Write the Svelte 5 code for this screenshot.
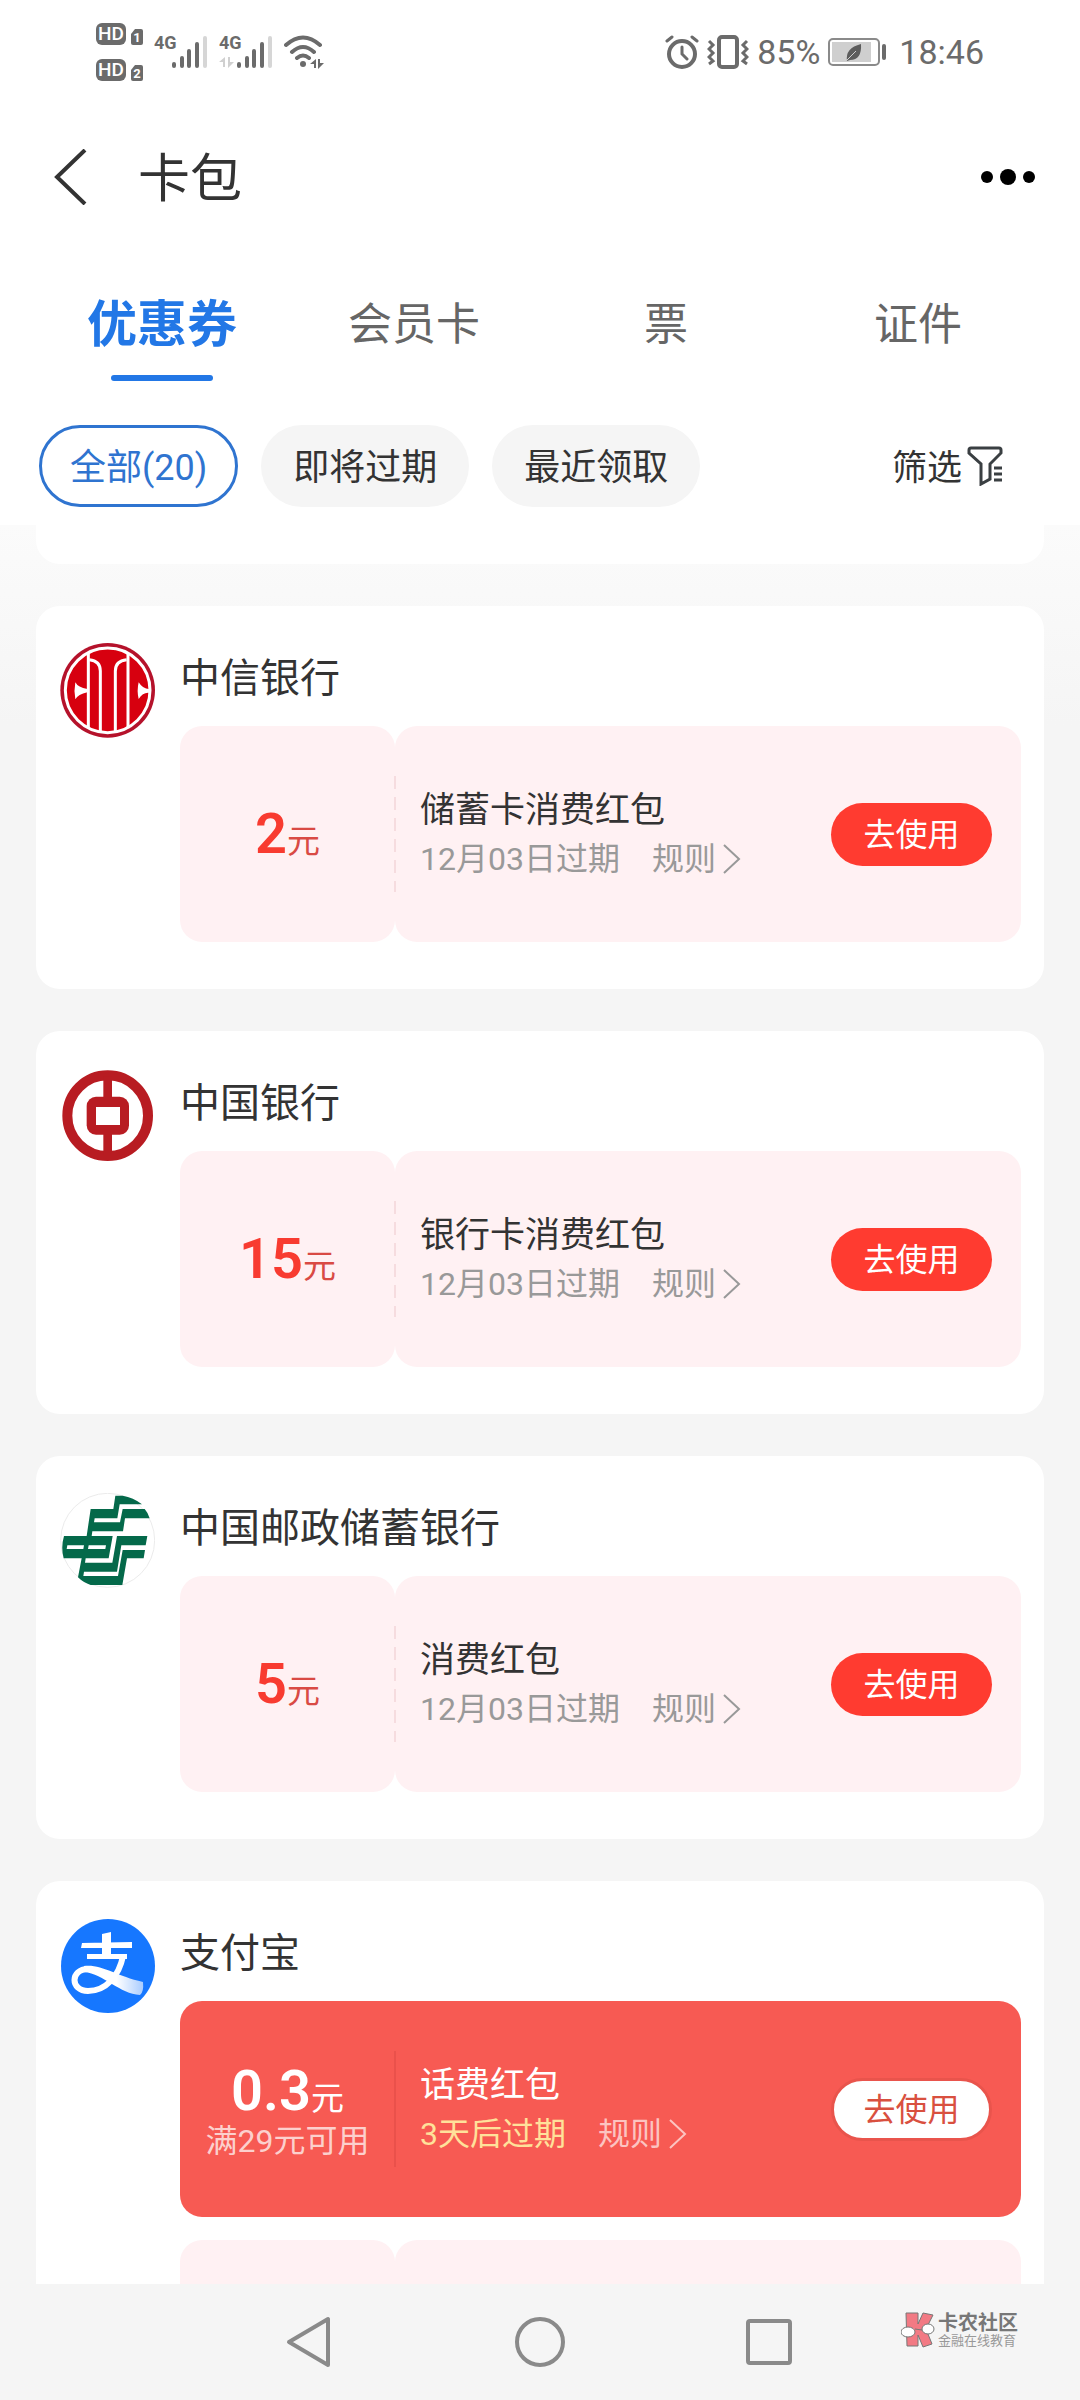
<script lang="ts">
	type Coupon = {
		amount?: string;
		limit?: string;
		title?: string;
		expiry?: string;
		urgent?: boolean;
	};

	type Merchant = {
		logo: 'citic' | 'boc' | 'psbc' | 'alipay';
		name: string;
		coupons: Coupon[];
	};

	const tabs = ['优惠券', '会员卡', '票', '证件'];
	const chips = ['全部(20)', '即将过期', '最近领取'];

	const merchants: Merchant[] = [
		{
			logo: 'citic',
			name: '中信银行',
			coupons: [{ amount: '2', title: '储蓄卡消费红包', expiry: '12月03日过期' }]
		},
		{
			logo: 'boc',
			name: '中国银行',
			coupons: [{ amount: '15', title: '银行卡消费红包', expiry: '12月03日过期' }]
		},
		{
			logo: 'psbc',
			name: '中国邮政储蓄银行',
			coupons: [{ amount: '5', title: '消费红包', expiry: '12月03日过期' }]
		},
		{
			logo: 'alipay',
			name: '支付宝',
			coupons: [
				{ amount: '0.3', limit: '满29元可用', title: '话费红包', expiry: '3天后过期', urgent: true },
				{}
			]
		}
	];

	let activeTab = $state(0);
	let activeChip = $state(0);
</script>

{#snippet signal(data: boolean)}
	<svg class="signal" width="54" height="38" viewBox="0 -4 54 38" aria-hidden="true">
		<text x="0" y="14" font-size="18" font-weight="700" fill="#6b6b6b">4G</text>
		{#if data}
			<path d="M6 22v10h-2v-5h-4zM9 22h2v5h4l-6 6z" fill="#d0d0d0" />
		{/if}
		<g stroke-width="4" stroke-linecap="round" stroke="#6b6b6b">
			<path d="M20 29v2M28 23v8M35 16v15M43 9v22" />
			<path d="M51 3v28" stroke="#d6d6d6" />
		</g>
	</svg>
{/snippet}

{#snippet logo(kind: string)}
	{#if kind === 'citic'}
		<svg class="logo" viewBox="60 69 285 285" aria-hidden="true">
			<circle cx="203" cy="211" r="142" fill="#b5122b" />
			<circle cx="203" cy="211" r="127" fill="#d7000f" stroke="#fff" stroke-width="9" />
			<g fill="none" stroke="#fff" stroke-width="9">
				<path d="M145 100v225M264 100v225" />
				<path d="M148 119c20 2 33 12 33 34v182M260 119c-20 2-34 12-34 34v182" />
			</g>
			<path d="M106 187q8 16 36 20v10q-28 6-36 21q-5-25 0-51zM296 187q14 22 34 20v12q-20-4-34 18q-6-25 0-50z" fill="#fff" />
		</svg>
	{:else if kind === 'boc'}
		<svg class="logo" viewBox="60 84 285 285" aria-hidden="true">
			<circle cx="203" cy="227" r="121" fill="#fff" stroke="#b81c22" stroke-width="30" />
			<path d="M190 110h26v235h-26z" fill="#b81c22" />
			<rect x="140" y="170" width="127" height="114" rx="28" fill="#b81c22" />
			<path d="M168 201h72v54h-72z" fill="#fff" />
		</svg>
	{:else if kind === 'psbc'}
		<svg class="logo" viewBox="60 69 285 285" aria-hidden="true">
			<circle cx="203" cy="211" r="141" fill="#fff" stroke="#ebebeb" stroke-width="3" />
			<path
				d="M152 117H220L226 77H248Q280 82 306 103H239L232 145H164L162 157H240L248 117H314Q324 128 329 145H255L249 184H157L155 198H218L206 265H137L135 278H217L231 198H322L317 226H244L231 305H132L130 318H234L248 240H315L311 265H261L247 345H152Q130 338 114 322L125 265H71Q62 232 72 198H140Z"
				fill="#04694a"
			/>
			<path d="M82 226h50l-2 11h-50zM146 226h52l-2 11h-52z" fill="#fff" />
		</svg>
	{:else}
		<svg class="logo" viewBox="0 0 95 95" aria-hidden="true">
			<defs>
				<linearGradient id="ribbon" x1="0" x2="1">
					<stop offset="0.55" stop-color="#fff" />
					<stop offset="1" stop-color="#a9ccff" />
				</linearGradient>
			</defs>
			<circle cx="48" cy="48" r="47" fill="#1677ff" />
			<path d="M22 25l50-1v6H21zM27 36h40v5H27zM42 16l9-2v24h-9z" fill="#fff" />
			<path d="M63 38C59 58 46 73 28 73C10 73 10 51 28 51" fill="none" stroke="#fff" stroke-width="6" />
			<path d="M24 48C42 46 56 58 83 64Q84 74 80 77C60 76 44 56 24 54Z" fill="url(#ribbon)" />
		</svg>
	{/if}
{/snippet}

<div class="app">
	<header>
		<div class="status">
			<div class="sims">
				{#each ['1', '2'] as sim}
					<div class="sim">
						<span class="hd">HD</span>
						<svg width="12" height="16" viewBox="0 0 12 16" aria-hidden="true">
							<path d="M4 0h6q2 0 2 2v12q0 2-2 2H2q-2 0-2-2V5z" fill="#6b6b6b" />
							<text x="6" y="13" font-size="13" font-weight="700" text-anchor="middle" fill="#fff">{sim}</text>
						</svg>
					</div>
				{/each}
			</div>
			{@render signal(false)}
			{@render signal(true)}
			<svg width="40" height="34" viewBox="0 0 40 34" aria-hidden="true">
				<g fill="none" stroke="#6b6b6b" stroke-width="4" stroke-linecap="round">
					<path d="M2 10Q19-5 36 10M8 17q11-10 22 0M13 23q6-5 12 0" />
				</g>
				<circle cx="19" cy="29" r="3" fill="#6b6b6b" />
				<path d="M32 24v9h-2v-4h-4zM34 24h2v4h4l-6 6z" fill="#6b6b6b" />
			</svg>
			<div class="status-right">
				<svg width="34" height="34" viewBox="0 0 34 34" fill="none" stroke="#6b6b6b" stroke-width="4" stroke-linecap="round" aria-hidden="true">
					<circle cx="17" cy="19" r="13" />
					<path d="M17 12v7l5 5M2 6l5-4M32 6l-5-4" stroke-width="3" />
				</svg>
				<svg width="42" height="34" viewBox="0 0 42 34" fill="none" stroke="#6b6b6b" stroke-width="4" aria-hidden="true">
					<rect x="12" y="2" width="18" height="30" rx="3" />
					<path d="M2 6l4 4-4 4 4 4-4 4 4 4-4 3M40 6l-4 4 4 4-4 4 4 4-4 4 4 3" stroke-width="3" />
				</svg>
				<span>85%</span>
				<svg class="battery" width="60" height="28" viewBox="0 0 60 28" aria-hidden="true">
					<rect x="1" y="1" width="50" height="26" rx="4" fill="#fff" stroke="#8a8a8a" stroke-width="2" />
					<path d="M4 4h39v20H4z" fill="#cfcfcf" />
					<path d="M33 6Q34 22 22 22l-3 1q-2-13 14-17z" fill="#5c5c5c" />
					<path d="M19 22l9-9" stroke="#cfcfcf" />
					<rect x="54" y="6" width="4" height="16" rx="2" fill="#6b6b6b" />
				</svg>
				<span>18:46</span>
			</div>
		</div>

		<div class="title-bar">
			<button class="icon-button" aria-label="返回">
				<svg width="34" height="56" viewBox="0 0 34 56" fill="none" stroke="#333" stroke-width="4" aria-hidden="true">
					<path d="M31 1L3 28l28 27" />
				</svg>
			</button>
			<h1>卡包</h1>
			<button class="icon-button more" aria-label="更多">
				<svg width="54" height="16" viewBox="0 0 54 16" aria-hidden="true">
					<circle cx="6" cy="8" r="6" />
					<circle cx="27" cy="8" r="8" />
					<circle cx="48" cy="8" r="6" />
				</svg>
			</button>
		</div>

		<nav class="tabs">
			{#each tabs as tab, i}
				<button class="tab" class:active={activeTab === i} onclick={() => (activeTab = i)}>{tab}</button>
			{/each}
		</nav>

		<div class="filters">
			{#each chips as chip, i}
				<button class="chip" class:active={activeChip === i} onclick={() => (activeChip = i)}>{chip}</button>
			{/each}
			<button class="filter">
				筛选
				<svg width="36" height="40" viewBox="0 0 36 40" fill="none" stroke="#3a3f42" stroke-width="3" aria-hidden="true">
					<path d="M4 2h28q2 0 2 2v3L23 18v15l-9 5V18L2 7V4q0-2 2-2z" />
					<path d="M27 22h8M27 28h8M27 34h8" />
				</svg>
			</button>
		</div>
	</header>

	<main>
		<div class="card-end"></div>
		{#each merchants as merchant}
			<section class="card">
				{@render logo(merchant.logo)}
				<div class="card-body">
					<h2>{merchant.name}</h2>
					{#each merchant.coupons as coupon}
						<article class="coupon" class:urgent={coupon.urgent}>
							<div class="value">
								{#if coupon.amount}
									<p class="amount"><strong>{coupon.amount}</strong>元</p>
								{/if}
								{#if coupon.limit}
									<p class="limit">{coupon.limit}</p>
								{/if}
							</div>
							<div class="detail">
								{#if coupon.title}
									<div class="info">
										<h3>{coupon.title}</h3>
										<p class="meta">
											<span class="expiry">{coupon.expiry}</span>
											<a href="#rules">
												规则
												<svg width="18" height="30" viewBox="0 0 18 30" fill="none" stroke="currentColor" stroke-width="2" aria-hidden="true">
													<path d="M1 1l15 14L1 29" />
												</svg>
											</a>
										</p>
									</div>
									<button class="use">去使用</button>
								{/if}
							</div>
						</article>
					{/each}
				</div>
			</section>
		{/each}
	</main>

	<footer>
		<button class="icon-button" aria-label="后退">
			<svg width="52" height="52" viewBox="0 0 52 52" fill="none" stroke="#8a8a8a" stroke-width="4" stroke-linejoin="round" aria-hidden="true">
				<path d="M43 3v46L4 26z" />
			</svg>
		</button>
		<button class="icon-button" aria-label="主页">
			<svg width="52" height="52" viewBox="0 0 52 52" fill="none" stroke="#8a8a8a" stroke-width="4" aria-hidden="true">
				<circle cx="26" cy="26" r="23" />
			</svg>
		</button>
		<button class="icon-button" aria-label="最近任务">
			<svg width="52" height="52" viewBox="0 0 52 52" fill="none" stroke="#8a8a8a" stroke-width="4" aria-hidden="true">
				<rect x="5" y="5" width="42" height="42" rx="2" />
			</svg>
		</button>
		<div class="watermark">
			<svg width="34" height="36" viewBox="0 0 34 36" stroke="#777" aria-hidden="true">
				<path d="M5 1h12v11l5-11 10 2-7 14 6 15-9 3-5-12v11H6z" fill="#f27a84" />
				<ellipse cx="7" cy="20" rx="7" ry="5" fill="#fff" />
				<ellipse cx="27" cy="17" rx="6" ry="5" fill="#fff" />
				<path d="M14 17l7 1" />
			</svg>
			<div>
				<p class="mark-name">卡农社区</p>
				<p class="mark-note">金融在线教育</p>
			</div>
		</div>
	</footer>
</div>

<style>
	:global(body) {
		margin: 0;
	}

	.app {
		display: flex;
		flex-direction: column;
		height: 100vh;
		overflow: hidden;
		background: #f5f5f5;
		color: #333;
		font-family: Roboto, 'Noto Sans CJK SC', sans-serif;
	}

	h1,
	h2,
	h3,
	p {
		margin: 0;
		font-weight: 400;
	}

	button {
		padding: 0;
		border: none;
		background: none;
		color: inherit;
		font-family: inherit;
		cursor: pointer;
	}

	svg {
		display: block;
		flex-shrink: 0;
	}

	header {
		flex-shrink: 0;
		padding-bottom: 18px;
		background: #fff;
	}

	.status {
		display: flex;
		align-items: center;
		gap: 11px;
		height: 104px;
		padding: 0 96px;
		color: #6b6b6b;
	}

	.sims {
		display: flex;
		flex-direction: column;
		gap: 14px;
	}

	.sim {
		display: flex;
		align-items: flex-end;
		gap: 5px;
	}

	.hd {
		width: 30px;
		border-radius: 6px;
		background: #6b6b6b;
		color: #fff;
		font-size: 19px;
		font-weight: 500;
		line-height: 22px;
		text-align: center;
	}

	.signal {
		margin-bottom: 4px;
	}

	.status-right {
		display: flex;
		align-items: center;
		gap: 8px;
		margin-left: auto;
		font-size: 34px;
		line-height: 40px;
	}

	.battery {
		margin-right: 3px;
	}

	.title-bar {
		display: flex;
		align-items: center;
		gap: 50px;
		height: 146px;
		padding: 0 45px 0 54px;
	}

	h1 {
		padding-top: 6px;
		font-size: 52px;
		line-height: 76px;
	}

	.more {
		margin-left: auto;
	}

	.tabs {
		display: flex;
		padding: 0 36px 44px;
	}

	.tab {
		display: flex;
		flex: 1;
		flex-direction: column;
		align-items: center;
		gap: 15px;
		padding-top: 40px;
		color: #666;
		font-size: 44px;
		line-height: 70px;
	}

	.tab::after {
		content: '';
		width: 102px;
		height: 6px;
		border-radius: 3px;
	}

	.tab.active {
		color: #2277e6;
		font-size: 50px;
		font-weight: 700;
	}

	.tab.active::after {
		background: #2277e6;
	}

	.filters {
		display: flex;
		align-items: center;
		gap: 23px;
		padding: 0 77px 0 39px;
	}

	.chip {
		height: 82px;
		padding: 0 32px 5px;
		border-radius: 41px;
		background: #f5f5f5;
		font-size: 36px;
	}

	.chip.active {
		padding: 0 28px 5px;
		border: 3px solid #2f74d0;
		background: #fff;
		color: #2f74d0;
	}

	.filter {
		display: flex;
		align-items: center;
		gap: 5px;
		margin-left: auto;
		padding-bottom: 4px;
		font-size: 35px;
	}

	.filter svg {
		margin-top: 4px;
	}

	main {
		display: flex;
		flex: 1;
		flex-direction: column;
		gap: 42px;
		min-height: 0;
		padding: 0 36px;
		overflow: hidden;
		background: linear-gradient(#fbfbfb, #f5f5f5 200px);
	}

	.card-end {
		flex-shrink: 0;
		height: 39px;
		border-radius: 0 0 24px 24px;
		background: #fff;
	}

	.card {
		display: flex;
		flex-shrink: 0;
		gap: 25px;
		padding: 37px 23px 47px 24px;
		border-radius: 24px;
		background: #fff;
	}

	.logo {
		width: 95px;
		height: 95px;
	}

	.card-body {
		flex: 1;
	}

	h2 {
		padding: 2px 0 13px;
		font-size: 40px;
		line-height: 68px;
	}

	.coupon {
		display: flex;
		min-height: 216px;
	}

	.coupon + .coupon {
		margin-top: 23px;
	}

	.value,
	.detail {
		display: flex;
		border-radius: 22px;
		background: #fff1f3;
	}

	.value {
		flex-direction: column;
		align-items: center;
		justify-content: center;
		width: 215px;
		color: #d94a44;
	}

	.detail {
		position: relative;
		flex: 1;
		align-items: center;
		justify-content: space-between;
		padding: 0 29px 0 25px;
	}

	/* perforation over the seam between the two halves */
	.detail::before {
		content: '';
		position: absolute;
		top: 50px;
		bottom: 50px;
		left: -1px;
		width: 2px;
		background: repeating-linear-gradient(#f6dcdf 0 13px, transparent 13px 21px);
	}

	.amount {
		padding-top: 8px;
		font-size: 33px;
		line-height: 48px;
	}

	.amount strong {
		color: #f83b30;
		font-size: 56px;
		font-weight: 600;
	}

	.limit {
		color: #fcd0cd;
		font-size: 32px;
		line-height: 36px;
	}

	h3 {
		padding-top: 2px;
		font-size: 35px;
		line-height: 48px;
	}

	.meta {
		display: flex;
		gap: 32px;
		color: #999;
		font-size: 32px;
		line-height: 48px;
	}

	.meta a {
		display: flex;
		align-items: center;
		gap: 7px;
		color: inherit;
		text-decoration: none;
	}

	.use {
		width: 161px;
		height: 63px;
		padding-bottom: 5px;
		border-radius: 32px;
		background: #ff3b30;
		color: #fff;
		font-size: 32px;
	}

	.urgent {
		border-radius: 22px;
		background: #f75a53;
	}

	.urgent .value,
	.urgent .detail {
		background: none;
		color: #fff;
	}

	.urgent .detail::before {
		background: #ea514b;
	}

	.urgent .amount strong {
		color: #fff;
	}

	.urgent .meta {
		color: #fcc4c1;
	}

	.urgent .expiry {
		color: #ffe19a;
	}

	.urgent .use {
		border: 3px solid #e9544c;
		background: #fff;
		color: #d9503f;
	}

	footer {
		position: relative;
		display: flex;
		flex-shrink: 0;
		align-items: center;
		justify-content: center;
		gap: 177px;
		height: 116px;
		background: #f5f5f5;
	}

	.watermark {
		position: absolute;
		top: 28px;
		right: 62px;
		display: flex;
		gap: 3px;
		color: #777;
	}

	.mark-name {
		font-size: 20px;
		font-weight: 700;
		line-height: 22px;
	}

	.mark-note {
		color: #999;
		font-size: 13px;
		line-height: 14px;
	}
</style>
